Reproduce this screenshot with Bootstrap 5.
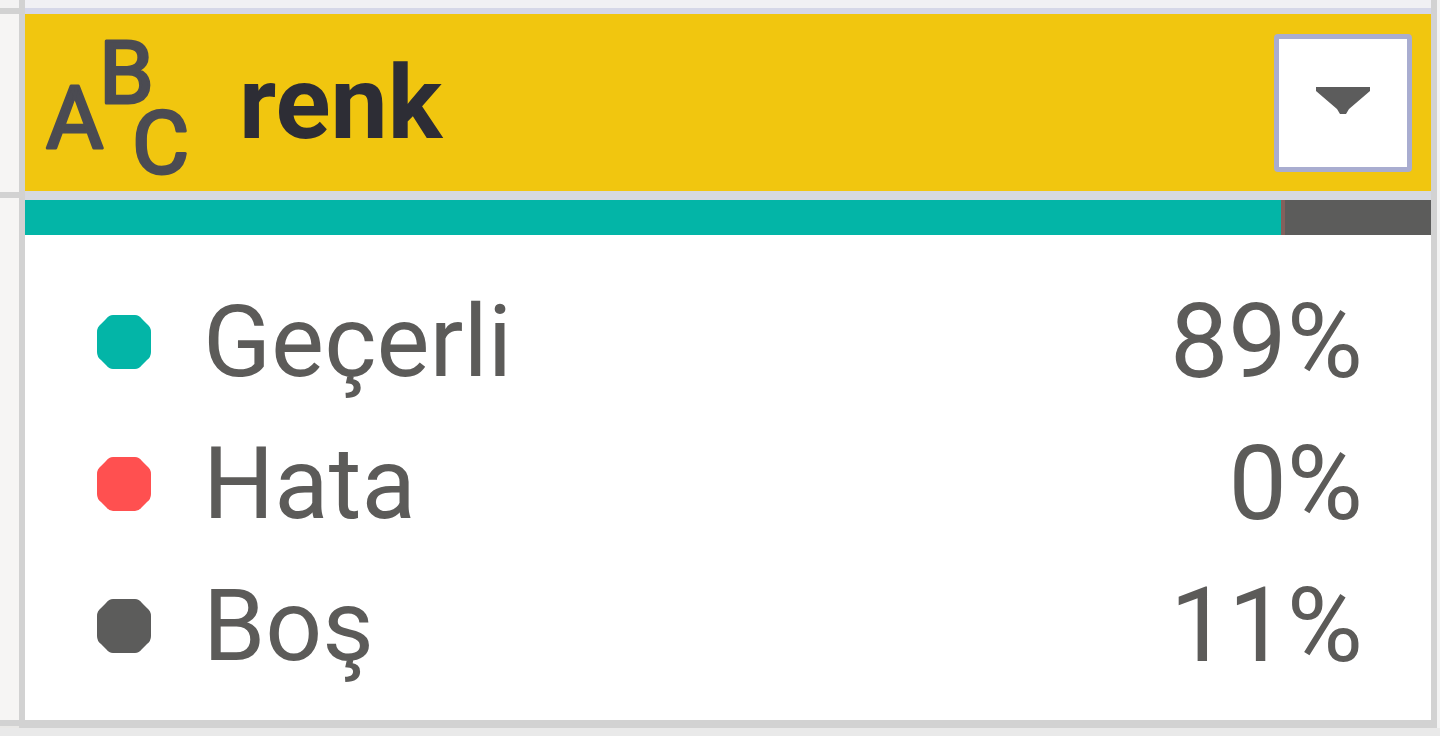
<!DOCTYPE html>
<html lang="tr">
<head>
<meta charset="utf-8">
<meta name="viewport" content="width=device-width, initial-scale=1">
<title>renk</title>
<link href="https://cdn.jsdelivr.net/npm/bootstrap@5.3.0/dist/css/bootstrap.min.css" rel="stylesheet">
<style>
  :root { --teal: #03b5a7; --coral: #ff5050; --slate: #5c5c5b; --line: #d2d2d2; --line-cool: #d5d7e8; }
  body { font-family: Roboto, "Liberation Sans", sans-serif; background: #e9e9e9; color: #5c5b59; }
  .rail { width: 19px; }
  .rail-top { height: 8px; background: #f3f2f2; }
  .rail-cell { background: #f6f5f4; border-top: 6px solid var(--line); }
  .rail-head { height: 184px; }
  .rail-foot { height: 8px; background: #e9e8e6; border-top: 6px solid var(--line); }
  .profile { border: solid var(--line); border-width: 0 6px; }
  .edge { width: 3px; background: #f3f3f3; }
  .top-strip { height: 14px; background: #f0f0f4; border-bottom: 6px solid var(--line-cool); }
  .head { background: #f1c60f; height: 177px; padding: 0 19px 0 16px; }
  .type-icon { width: 150px; height: 144px; margin-right: 48px; color: #4b4b52; overflow: visible; }
  .type-icon text { font-weight: 400; font-size: 88px; fill: currentColor; stroke: currentColor; stroke-width: 3px; stroke-linejoin: round; }
  .title { font-size: 102px; line-height: 118px; font-weight: 700; color: #2d2d35; }
  .menu-btn { width: 138px; height: 138px; background: #fff; border: 5px solid #a9add0; border-radius: 4px; }
  .quality { height: 44px; border-top: 9px solid #d6d9e0; }
  .seg-valid { background: var(--teal); }
  .seg-empty { background: var(--slate); border-left: 4px solid #83605c; }
  .stats { background: #fff; padding: 36px 68px 23px 72px; border-bottom: 8px solid var(--line); }
  .stats table { font-size: 100px; line-height: 142px; }
  .stats th, .stats td { padding: 0; font-weight: 400; }
  .stats td { font-size: 104px; }
  .dot { width: 54px; height: 54px; margin-right: 52px; }
  .valid { color: var(--teal); } .error { color: var(--coral); } .empty { color: var(--slate); }
</style>
</head>
<body>
<svg class="d-none" aria-hidden="true"><symbol id="dot" viewBox="0 0 54 54"><path d="M16 0H38Q42 0 45 4L50 9Q54 12 54 17V37Q54 42 50 45L45 50Q42 54 38 54H16Q12 54 9 50L4 45Q0 42 0 37V17Q0 12 4 9L9 4Q12 0 16 0Z" fill="currentColor"/></symbol></svg>
<main class="d-flex">
  <div class="rail flex-shrink-0 d-flex flex-column" aria-hidden="true">
    <div class="rail-top"></div>
    <div class="rail-cell rail-head"></div>
    <div class="rail-cell flex-grow-1"></div>
    <div class="rail-foot"></div>
  </div>
  <section class="profile flex-grow-1">
    <div class="top-strip"></div>
    <header class="head d-flex align-items-center">
      <svg class="type-icon flex-shrink-0" viewBox="0 0 150 144" aria-hidden="true">
        <text x="5" y="117">A</text>
        <text x="58" y="72">B</text>
        <text x="91" y="142">C</text>
      </svg>
      <h1 class="title mb-0">renk</h1>
      <button type="button" class="menu-btn ms-auto p-0 d-flex align-items-center justify-content-center" aria-label="Filtre">
        <svg class="mb-1" width="56" height="30" viewBox="0 0 56 30" aria-hidden="true"><path d="M1 1H55V5L34 23L31 28H25L22 23L1 5Z" fill="#5c5c5c"/></svg>
      </button>
    </header>
    <div class="quality d-flex">
      <div class="seg-valid" style="width:89.3%"></div>
      <div class="seg-empty flex-grow-1"></div>
    </div>
    <div class="stats">
      <table class="w-100">
        <tbody>
          <tr><th scope="row"><span class="d-flex align-items-center"><svg class="dot valid" aria-hidden="true"><use href="#dot"/></svg>Geçerli</span></th><td class="text-end">89%</td></tr>
          <tr><th scope="row"><span class="d-flex align-items-center"><svg class="dot error" aria-hidden="true"><use href="#dot"/></svg>Hata</span></th><td class="text-end">0%</td></tr>
          <tr><th scope="row"><span class="d-flex align-items-center"><svg class="dot empty" aria-hidden="true"><use href="#dot"/></svg>Boş</span></th><td class="text-end">11%</td></tr>
        </tbody>
      </table>
    </div>
  </section>
  <div class="edge flex-shrink-0" aria-hidden="true"></div>
</main>
<script src="https://cdn.jsdelivr.net/npm/bootstrap@5.3.0/dist/js/bootstrap.bundle.min.js"></script>
</body>
</html>
